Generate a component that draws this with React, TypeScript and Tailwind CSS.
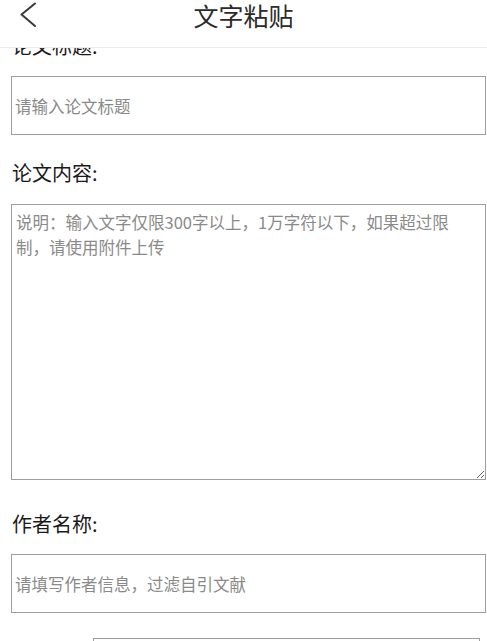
import React from "react";

const font = { fontFamily: '"Noto Sans CJK SC", "Noto Sans", sans-serif' };

function Label({ text, className = "" }: { text: string; className?: string }) {
  return <div className={`h-[30px] pl-[1px] text-[20px] leading-[30px] text-[#1a1a1a] ${className}`}>{text}</div>;
}

export default function App() {
  return (
    <div className="min-h-[641px] w-full overflow-hidden bg-white" style={font}>
      <header className="relative z-10 grid h-[48px] grid-cols-[60px_1fr_60px] border-b border-[#ececec] bg-white">
        <div className="pl-[19px] pt-[2px]">
          <svg width="18" height="26" viewBox="0 0 18 26" fill="none">
            <polyline points="16,1.5 2.5,12.5 16,24" stroke="#3a3a3a" strokeWidth="2" strokeLinecap="round" strokeLinejoin="round" />
          </svg>
        </div>
        <h1 className="text-center text-[25px] leading-[30px] text-[#2b2b2b]">文字粘贴</h1>
        <div />
      </header>

      <main className="-mt-[17px] pl-[11px] pr-[1px]">
        <Label text="论文标题:" />
        <input
          readOnly
          placeholder="请输入论文标题"
          className="mt-[15px] block h-[59px] w-full border border-[#9e9e9e] px-[3px] text-[16.5px] text-[#333] outline-none placeholder:text-[#8a8a8a]"
        />

        <Label text="论文内容:" className="mt-[23px]" />
        <textarea
          readOnly
          placeholder="说明：输入文字仅限300字以上，1万字符以下，如果超过限制，请使用附件上传"
          className="mt-[16px] block h-[276px] w-full border border-[#9e9e9e] pl-[4px] pr-[20px] pt-[5px] text-[16.5px] leading-[25px] text-[#333] outline-none placeholder:text-[#8a8a8a]"
        />

        <Label text="作者名称:" className="mt-[29px]" />
        <input
          readOnly
          placeholder="请填写作者信息，过滤自引文献"
          className="mt-[15px] block h-[59px] w-full border border-[#9e9e9e] px-[3px] text-[16.5px] text-[#333] outline-none placeholder:text-[#8a8a8a]"
        />

        <div className="ml-[82px] mr-[6px] mt-[25px] h-[59px] border border-[#9e9e9e]" />
      </main>
    </div>
  );
}
